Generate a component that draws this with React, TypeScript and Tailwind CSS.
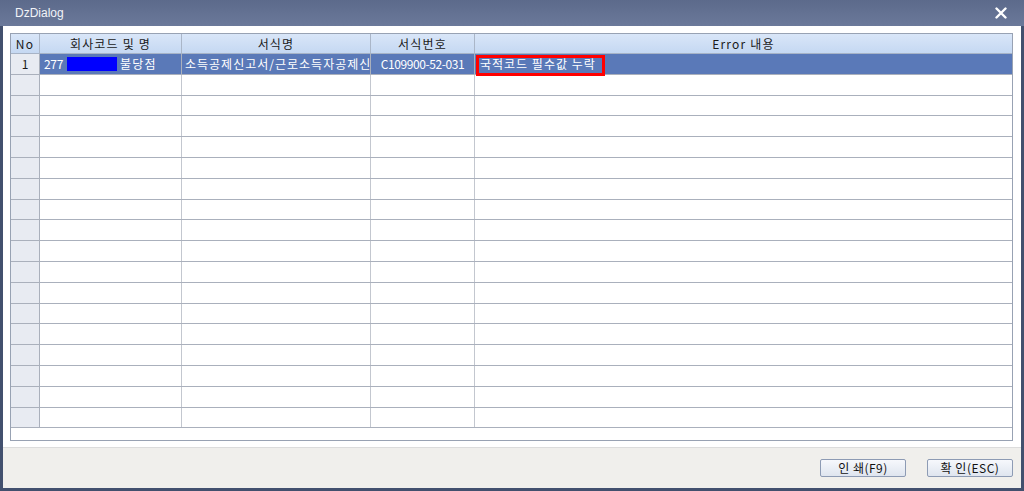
const cols = ["w-[29px]", "w-[142px]", "w-[189px]", "w-[104px]", "flex-1"]

function HeaderRow() {
    const labels = ["No", "회사코드 및 명", "서식명", "서식번호", "Error 내용"]
    return (
        <div className="flex h-[20px] border-b border-[#a7b3c6] bg-gradient-to-b from-[#d9e6f8] to-[#c5d8f2]">
            {labels.map((label, i) => (
                <div
                    key={label}
                    className={`${cols[i]} flex items-center justify-center border-r border-[#aab6c8] text-[12px] tracking-[1.2px] text-[#1a1a1a] last:border-r-0`}
                >
                    {label}
                </div>
            ))}
        </div>
    )
}

function DataRow() {
    return (
        <div className="flex h-[20.8px] border-b border-[#aab0bc] bg-[#5a79b8] text-[12px] text-white">
            <div className={`${cols[0]} flex items-center justify-center border-r border-[#aab0bc] bg-[#e8ebf2] text-[#1a1a1a]`}>1</div>
            <div className={`${cols[1]} flex items-center border-r border-[#aab0bc] pl-[4px]`}>
                <span className="tracking-[-0.3px]">277</span>
                <span className="ml-[4px] h-[14px] w-[50px] bg-[#0000ff]" />
                <span className="ml-[3px] tracking-[1.2px]">불당점</span>
            </div>
            <div className={`${cols[2]} overflow-hidden border-r border-[#aab0bc]`}>
                <div className="flex h-full w-full items-center overflow-hidden whitespace-nowrap pl-[3px] tracking-[1px]">
                    소득공제신고서/근로소득자공제신고서
                </div>
            </div>
            <div className={`${cols[3]} flex items-center justify-center border-r border-[#aab0bc] tracking-[-0.4px]`}>C109900-52-031</div>
            <div className={`${cols[4]} relative flex items-center pl-[5px] tracking-[1px]`}>
                <span className="absolute left-[1px] top-[1px] h-[21px] w-[129px] border-[3px] border-[#ff0000]" />
                국적코드 필수값 누락
            </div>
        </div>
    )
}

function EmptyRow() {
    return (
        <div className="flex h-[20.8px] border-b border-[#aab0bc] bg-white">
            <div className={`${cols[0]} border-r border-[#aab0bc] bg-[#e8ebf2]`} />
            <div className={`${cols[1]} border-r border-[#c3c7cf]`} />
            <div className={`${cols[2]} border-r border-[#c3c7cf]`} />
            <div className={`${cols[3]} border-r border-[#c3c7cf]`} />
            <div className={cols[4]} />
        </div>
    )
}

function Button({ label }: { label: string }) {
    return (
        <button className="flex h-[18px] w-[86px] items-center justify-center rounded-[2px] border border-[#8d9bb4] bg-gradient-to-b from-[#f6f8fc] to-[#dfe5ef] text-[12px] tracking-[0.5px] text-[#111]">
            {label}
        </button>
    )
}

export default function App() {
    const empties = Array.from({ length: 17 }, (_, i) => i)
    return (
        <div
            className="flex h-[491px] w-[1024px] flex-col bg-[#42506e]"
            style={{ fontFamily: '"Noto Sans CJK KR", "Liberation Sans", sans-serif' }}
        >
            <div className="flex h-[26px] items-center justify-between bg-gradient-to-b from-[#5c6a8b] to-[#6b799a] pl-[15px] pr-[17px]">
                <span className="font-['Liberation_Sans'] text-[12px] text-[#f2f4f8]">DzDialog</span>
                <svg width="12" height="12" viewBox="0 0 12 12">
                    <path d="M1.5 1.5 L10.5 10.5 M10.5 1.5 L1.5 10.5" stroke="#ffffff" strokeWidth="2.4" strokeLinecap="round" />
                </svg>
            </div>
            <div className="mx-[3px] flex flex-1 flex-col bg-white">
                <div className="pl-[7px] pr-[8px] pt-[7px]">
                    <div className="flex h-[408px] flex-col border border-[#98a2b3] bg-white">
                        <HeaderRow />
                        <DataRow />
                        {empties.map((i) => (
                            <EmptyRow key={i} />
                        ))}
                    </div>
                </div>
                <div className="mt-[6px] flex flex-1 items-center justify-end gap-[21px] border-t border-[#dcdcdc] bg-[#f0efec] pr-[8px]">
                    <Button label="인 쇄(F9)" />
                    <Button label="확 인(ESC)" />
                </div>
            </div>
            <div className="h-[3px]" />
        </div>
    )
}
